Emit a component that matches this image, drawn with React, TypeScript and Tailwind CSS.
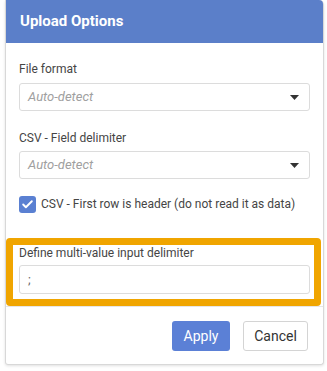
import { Check } from 'lucide-react'

function SelectBox({ placeholder }: { placeholder: string }) {
  return (
    <div className="flex h-[28px] items-center justify-between rounded-[3px] border border-[#dcdcdc] bg-white pl-[8px] pr-[10px]">
      <span className="text-[13px] italic text-[#a0a0a0]">{placeholder}</span>
      <svg width="9" height="5" viewBox="0 0 9 5" className="text-[#333]">
        <path d="M0 0 L9 0 L4.5 5 Z" fill="currentColor" />
      </svg>
    </div>
  )
}

export default function App() {
  return (
    <div className="h-[371px] w-[327px] bg-white pl-[5px] pr-[3px] font-['Roboto',sans-serif] text-[#454545]">
      <div className="flex flex-col rounded-b-[3px] rounded-tr-[5px] border-x border-b border-[#d8d8d8] shadow-[0_1px_3px_rgba(0,0,0,0.12)]">
        <div className="flex h-[43px] items-center rounded-tr-[4px] bg-[#5b7fc9] pl-[14px] text-[15px] font-bold text-white">
          Upload Options
        </div>

        <div className="flex flex-col px-[13px] pt-[18px]">
          <label className="text-[12px] leading-[16px]">File format</label>
          <div className="mt-[6px]">
            <SelectBox placeholder="Auto-detect" />
          </div>

          <label className="mt-[19px] text-[12px] leading-[16px]">CSV - Field delimiter</label>
          <div className="mt-[5px]">
            <SelectBox placeholder="Auto-detect" />
          </div>

          <div className="mt-[17px] flex items-center gap-[5px]">
            <span className="flex h-[17px] w-[17px] items-center justify-center rounded-[3px] bg-[#5a80d2]">
              <Check size={13} strokeWidth={3.5} className="text-white" />
            </span>
            <span className="whitespace-nowrap text-[12px] leading-[17px]">
              CSV - First row is header (do not read it as data)
            </span>
          </div>

          <div className="-ml-[13px] -mr-[11px] mt-[25px] rounded-[4px] border-[7px] border-[#f0a500] pb-[5px] pl-[6px] pr-[4px]">
            <label className="block text-[12px] leading-[16px]">Define multi-value input delimiter</label>
            <div className="mt-[4px] flex h-[29px] items-center rounded-[3px] border border-[#dcdcdc] pl-[8px] text-[13px] text-[#666]">
              ;
            </div>
          </div>
        </div>

        <div className="flex justify-end gap-[13px] border-t border-[#e6e6e6] pb-[13px] pr-[15px] pt-[14px]">
          <button className="h-[30px] w-[58px] rounded-[3px] bg-[#5b80d6] text-[14px] text-white">Apply</button>
          <button className="h-[30px] w-[65px] rounded-[3px] border border-[#d4d4d4] bg-white text-[14px] text-[#333]">
            Cancel
          </button>
        </div>
      </div>
    </div>
  )
}
